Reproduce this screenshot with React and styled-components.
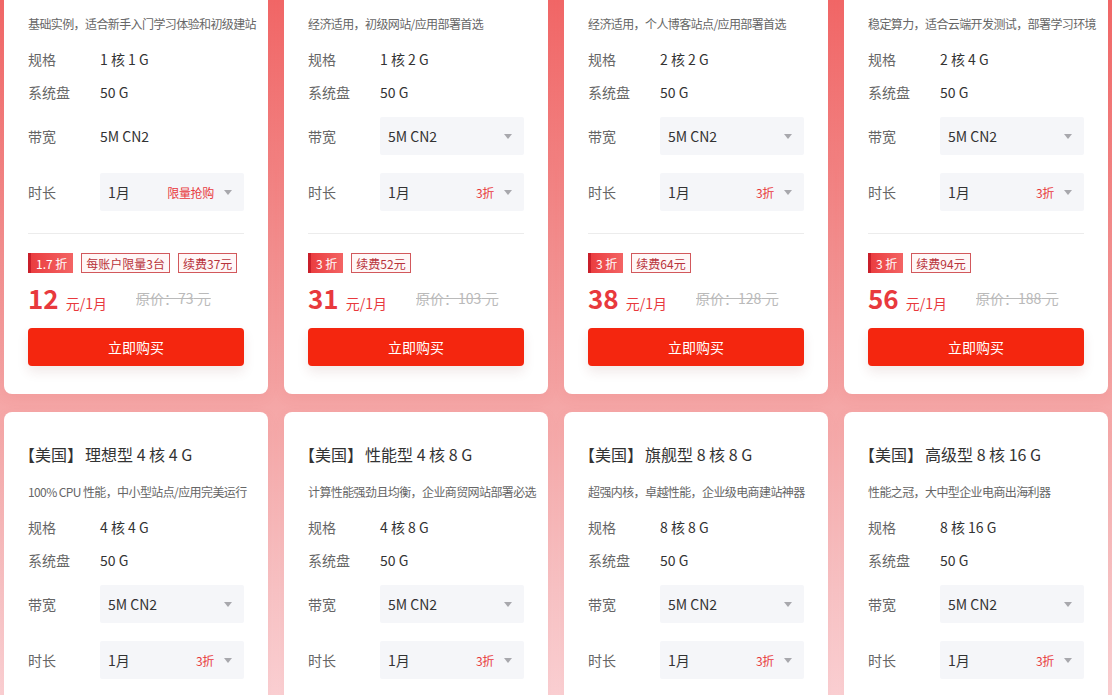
import React from "react";
import styled, { createGlobalStyle } from "styled-components";

const Global = createGlobalStyle`
  html, body { margin: 0; padding: 0; height: 100%; }
  body {
    overflow: hidden;
    font-family: "Noto Sans CJK SC", "Noto Sans", sans-serif;
    background: linear-gradient(180deg, #f26868 0%, #f38e8e 35%, #f5a6a6 58%, #f8c4c6 85%, #fbd2d5 100%);
    color: #333;
  }
`;

const Page = styled.div`
  height: 695px;
  overflow: hidden;
`;

const Grid = styled.div`
  display: grid;
  grid-template-columns: repeat(4, 264px);
  column-gap: 16px;
  row-gap: 18px;
  padding: 0 4px;
  margin-top: -56px;
`;

const Card = styled.div`
  background: #fff;
  border-radius: 8px;
  padding: 30px 24px 28px;
  box-shadow: 0 4px 14px rgba(200, 60, 60, 0.08);
  display: flex;
  flex-direction: column;
`;

const Title = styled.div`
  font-size: 16px;
  line-height: 24px;
  color: #333;
  white-space: nowrap;
  display: flex;
`;

const Region = styled.span`
  font-feature-settings: "halt";
  margin-left: -1px;
  margin-right: 10px;
`;

const Desc = styled.div`
  margin-top: 16px;
  font-size: 12px;
  line-height: 20px;
  color: #666;
  white-space: nowrap;
  letter-spacing: -0.6px;
`;

const Specs = styled.div`
  margin-top: 8px;
  display: flex;
  flex-direction: column;
`;

const SpecRow = styled.div`
  display: flex;
  align-items: center;
  height: ${(p) => (p.$tall ? "38px" : "33px")};
  margin-top: ${(p) => p.$mt || 0}px;
  font-size: 14px;
`;

const Label = styled.div`
  width: 72px;
  flex: none;
  color: #666;
`;

const Value = styled.div`
  color: #333;
`;

const Select = styled.div`
  flex: 1;
  height: 38px;
  background: #f5f6f9;
  border-radius: 2px;
  display: flex;
  align-items: center;
  padding: 0 12px 0 8px;
  font-size: 14px;
  color: #333;
`;

const SelectText = styled.span`
  flex: 1;
`;

const Hot = styled.span`
  color: #e8393d;
  font-size: 12px;
  margin-right: 10px;
  letter-spacing: -0.3px;
`;

const Arrow = styled.span`
  width: 0;
  height: 0;
  border-left: 4px solid transparent;
  border-right: 4px solid transparent;
  border-top: 5px solid #a8a8ad;
`;

const Divider = styled.div`
  margin-top: 22px;
  height: 1px;
  background: #ececec;
`;

const Tags = styled.div`
  margin-top: 19px;
  display: flex;
  gap: 8px;
  height: 20px;
`;

const Badge = styled.span`
  display: inline-flex;
  align-items: center;
  height: 20px;
  padding: 0 6px 0 5px;
  font-size: 12px;
  color: #fff;
  background: linear-gradient(90deg, #ea3d40, #f36464);
  border-left: 3px solid #c81f2a;
  box-sizing: border-box;
`;

const Tag = styled.span`
  display: inline-flex;
  align-items: center;
  height: 20px;
  padding: 0 4px;
  font-size: 12px;
  color: #b8323a;
  background: #fff7f7;
  border: 1px solid #d2585c;
  box-sizing: border-box;
`;

const PriceRow = styled.div`
  margin-top: 10px;
  height: 30px;
  display: flex;
  align-items: center;
`;

const PriceMain = styled.div`
  width: 108px;
  flex: none;
  display: flex;
  align-items: baseline;
  color: #e8393d;
`;

const Amount = styled.span`
  font-size: 26px;
  font-weight: 700;
  line-height: 30px;
`;

const Unit = styled.span`
  font-size: 14px;
  margin-left: 7px;
`;

const Orig = styled.span`
  font-size: 14px;
  color: #bababa;
  text-decoration: line-through;
`;

const BuyButton = styled.button`
  margin-top: 15px;
  height: 38px;
  border: none;
  border-radius: 4px;
  background: #f4260f;
  color: #fff;
  font-family: inherit;
  font-size: 14px;
  box-shadow: 0 6px 12px rgba(120, 40, 40, 0.1);
  cursor: pointer;
`;

const plans = [
  { type: "入门型", spec: "1 核 1 G", desc: "基础实例，适合新手入门学习体验和初级建站", plainBw: true, hot: "限量抢购", badge: "1.7 折", tags: ["每账户限量3台", "续费37元"], price: 12, orig: 73 },
  { type: "基础型", spec: "1 核 2 G", desc: "经济适用，初级网站/应用部署首选", hot: "3折", badge: "3 折", tags: ["续费52元"], price: 31, orig: 103 },
  { type: "标准型", spec: "2 核 2 G", desc: "经济适用，个人博客站点/应用部署首选", hot: "3折", badge: "3 折", tags: ["续费64元"], price: 38, orig: 128 },
  { type: "进阶型", spec: "2 核 4 G", desc: "稳定算力，适合云端开发测试，部署学习环境", hot: "3折", badge: "3 折", tags: ["续费94元"], price: 56, orig: 188 },
  { type: "理想型", spec: "4 核 4 G", desc: "100% CPU 性能，中小型站点/应用完美运行", hot: "3折", badge: "3 折", tags: ["续费118元"], price: 71, orig: 236 },
  { type: "性能型", spec: "4 核 8 G", desc: "计算性能强劲且均衡，企业商贸网站部署必选", hot: "3折", badge: "3 折", tags: ["续费168元"], price: 101, orig: 336 },
  { type: "旗舰型", spec: "8 核 8 G", desc: "超强内核，卓越性能，企业级电商建站神器", hot: "3折", badge: "3 折", tags: ["续费236元"], price: 142, orig: 472 },
  { type: "高级型", spec: "8 核 16 G", desc: "性能之冠，大中型企业电商出海利器", hot: "3折", badge: "3 折", tags: ["续费336元"], price: 202, orig: 672 },
];

function PlanCard({ p }) {
  return (
    <Card>
      <Title>
        <Region>【美国】</Region>
        <span>{p.type} {p.spec}</span>
      </Title>
      <Desc>{p.desc}</Desc>
      <Specs>
        <SpecRow>
          <Label>规格</Label>
          <Value>{p.spec}</Value>
        </SpecRow>
        <SpecRow>
          <Label>系统盘</Label>
          <Value>50 G</Value>
        </SpecRow>
        <SpecRow $tall $mt={9}>
          <Label>带宽</Label>
          {p.plainBw ? (
            <Value>5M CN2</Value>
          ) : (
            <Select>
              <SelectText>5M CN2</SelectText>
              <Arrow />
            </Select>
          )}
        </SpecRow>
        <SpecRow $tall $mt={18}>
          <Label>时长</Label>
          <Select>
            <SelectText>1月</SelectText>
            <Hot>{p.hot}</Hot>
            <Arrow />
          </Select>
        </SpecRow>
      </Specs>
      <Divider />
      <Tags>
        <Badge>{p.badge}</Badge>
        {p.tags.map((t) => (
          <Tag key={t}>{t}</Tag>
        ))}
      </Tags>
      <PriceRow>
        <PriceMain>
          <Amount>{p.price}</Amount>
          <Unit>元/1月</Unit>
        </PriceMain>
        <Orig>原价：{p.orig} 元</Orig>
      </PriceRow>
      <BuyButton>立即购买</BuyButton>
    </Card>
  );
}

export default function App() {
  return (
    <Page>
      <Global />
      <Grid>
        {plans.map((p) => (
          <PlanCard key={p.type} p={p} />
        ))}
      </Grid>
    </Page>
  );
}
